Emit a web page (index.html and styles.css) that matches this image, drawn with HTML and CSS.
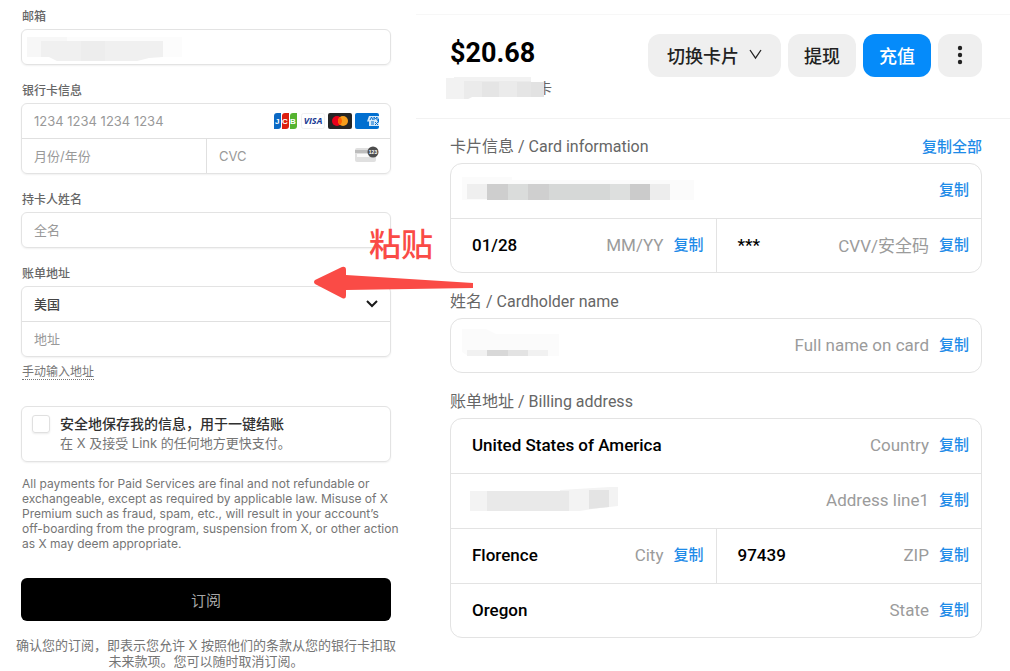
FILE: index.html
```html
<!DOCTYPE html>
<html lang="zh-CN">
<head>
  <meta charset="UTF-8">
  <meta name="viewport" content="width=device-width, initial-scale=1.0">
  <title>订阅</title>
  <link rel="stylesheet" href="styles.css">
</head>
<body>

  <div class="page">

    <!-- Checkout form -->
    <form class="checkout">
      <div class="group">
        <label for="email">邮箱</label>
        <div class="box">
          <div class="line">
            <input type="email" id="email">
            <svg class="mask mask-email" width="156" height="26" aria-hidden="true">
              <rect width="40" height="20" fill="#f7f7f7"/>
              <rect x="40" width="115" height="20" fill="#fcfcfc"/>
              <path d="M14 4H136V20L122 21L110 24H30L22 20H14Z" fill="#f0f0f0"/>
              <path d="M54 4H78V24H54Z" fill="#ededed"/>
            </svg>
          </div>
        </div>
      </div>

      <div class="group">
        <label for="cardNumber">银行卡信息</label>
        <div class="box">
          <div class="line">
            <input type="text" id="cardNumber" placeholder="1234 1234 1234 1234">
            <div class="brands">
              <svg width="24" height="16" viewBox="0 0 24 16" aria-hidden="true">
                <path d="M3 0H7V13Q7 16 4 16H0V3Q0 0 3 0Z" fill="#0b69c4"/>
                <path d="M11 0H15V13Q15 16 12 16H8V3Q8 0 11 0Z" fill="#dc1f10"/>
                <path d="M19 0H23V13Q23 16 20 16H16V3Q16 0 19 0Z" fill="#55b330"/>
                <text x="1" y="11" class="brand-jcb">J</text>
                <text x="8" y="11" class="brand-jcb">C</text>
                <text x="16" y="11" class="brand-jcb">B</text>
              </svg>
              <svg width="24" height="16" viewBox="0 0 24 16" aria-hidden="true">
                <rect x=".5" y=".5" width="23" height="15" rx="2" fill="#fff" stroke="#f0f0f0"/>
                <text x="12" y="11" class="brand-visa">VISA</text>
              </svg>
              <svg width="24" height="16" viewBox="0 0 24 16" aria-hidden="true">
                <rect width="24" height="16" rx="2" fill="#252525"/>
                <circle cx="9" cy="8" r="5" fill="#eb001b"/>
                <circle cx="15" cy="8" r="5" fill="#f79e1b"/>
                <path d="M12 4A5 5 0 0 1 12 12A5 5 0 0 1 12 4Z" fill="#ff5f00"/>
              </svg>
              <svg width="24" height="16" viewBox="0 0 24 16" aria-hidden="true">
                <rect width="24" height="16" rx="2" fill="#016fd0"/>
                <path d="M14 3H24V5L22 7.500L24 10V13H14V8.500H12L14 3Z" fill="#d5e8f8"/>
                <path d="M15 7L16.500 4L18 7M19 7V4L20.500 6L22 4V7M16 9H19M16 11H19M20 9L23 12M23 9L20 12" fill="none" stroke="#016fd0"/>
              </svg>
            </div>
          </div>
          <div class="line split">
            <input type="text" aria-label="月份/年份" placeholder="月份/年份">
            <div class="cvc">
              <input type="text" aria-label="CVC" placeholder="CVC">
              <svg width="24" height="20" viewBox="0 0 24 20" aria-hidden="true">
                <rect y="2" width="21" height="14" rx="2" fill="#e0e0e0"/>
                <rect y="4" width="21" height="3" fill="#bdbdbd"/>
                <rect x="2" y="8" width="12" height="3" fill="#fafafa"/>
                <circle cx="18" cy="6" r="5.500" fill="#4d4d4d"/>
                <text x="18" y="8" class="cvc-digits">123</text>
              </svg>
            </div>
          </div>
        </div>
      </div>

      <div class="group">
        <label for="holder">持卡人姓名</label>
        <div class="box">
          <div class="line"><input type="text" id="holder" placeholder="全名"></div>
        </div>
      </div>

      <div class="group">
        <label for="country">账单地址</label>
        <div class="box">
          <div class="line">
            <select id="country">
              <option>美国</option>
            </select>
            <svg class="chevron" width="12" height="8" viewBox="0 0 12 8" aria-hidden="true">
              <path d="M1 1L6 6L11 1" fill="none" stroke="#1a1a1a" stroke-width="2"/>
            </svg>
          </div>
          <div class="line"><input type="text" aria-label="地址" placeholder="地址"></div>
        </div>
        <a class="manual" href="#">手动输入地址</a>
      </div>

      <div class="save">
        <input type="checkbox" id="save">
        <label for="save">
          <strong>安全地保存我的信息，用于一键结账</strong>
          <span>在 X 及接受 Link 的任何地方更快支付。</span>
        </label>
      </div>

      <p class="terms">All payments for Paid Services are final and not refundable or<br>
        exchangeable, except as required by applicable law. Misuse of X<br>
        Premium such as fraud, spam, etc., will result in your account’s<br>
        off-boarding from the program, suspension from X, or other action<br>
        as X may deem appropriate.</p>

      <button class="subscribe" type="button">订阅</button>

      <p class="confirm">确认您的订阅，即表示您允许 X 按照他们的条款从您的银行卡扣取<br>未来款项。您可以随时取消订阅。</p>
    </form>

    <!-- Virtual card details -->
    <main class="wallet">
      <header class="top">
        <div class="balance">
          <h1>$20.68</h1>
          <div class="card-name">
            <span>卡</span>
            <svg class="mask mask-name" width="98" height="22" aria-hidden="true">
              <path d="M0 1H8V0H85V5H98V20H26L22 22H0Z" fill="#f2f2f2"/>
              <path d="M18 4H85V20H26L22 22H18Z" fill="#ebebeb"/>
              <path d="M36 5H53V20H36ZM71 5H85V20H71Z" fill="#e5e5e5"/>
              <path d="M85 5H98V20H85Z" fill="#e2e2e2"/>
            </svg>
          </div>
        </div>
        <div class="actions">
          <button class="btn btn-switch" type="button">切换卡片
            <svg width="13" height="11" viewBox="0 0 13 11" aria-hidden="true">
              <path d="M1 1L6.500 9L12 1" fill="none" stroke="#222" stroke-width="1.300"/>
            </svg>
          </button>
          <button class="btn" type="button">提现</button>
          <button class="btn btn-primary" type="button">充值</button>
          <button class="btn btn-more" type="button" aria-label="更多">
            <svg width="6" height="20" viewBox="0 0 6 20" aria-hidden="true">
              <circle cx="3" cy="3" r="2.200"/>
              <circle cx="3" cy="10" r="2.200"/>
              <circle cx="3" cy="17" r="2.200"/>
            </svg>
          </button>
        </div>
      </header>

      <div class="details">
        <section>
          <div class="title">
            <h2>卡片信息 / Card information</h2>
            <button class="copy" type="button">复制全部</button>
          </div>
          <div class="card">
            <div class="row">
              <div class="cell">
                <svg class="mosaic" width="232" height="26" aria-hidden="true">
                  <path d="M0 0H50V3H232V23H0Z" fill="#fbfbfb"/>
                  <path d="M5 7H25V22H5Z" fill="#efefef"/>
                  <path d="M25 7H46V23H25Z" fill="#cecece"/>
                  <path d="M46 7H66V23H46Z" fill="#dadcdb"/>
                  <path d="M66 7H87V23H66Z" fill="#cfcfcf"/>
                  <path d="M87 7H148V23H87Z" fill="#d6d8d7"/>
                  <path d="M148 7H168V23H148Z" fill="#dddfde"/>
                  <path d="M168 7H188V23H168Z" fill="#cbcbcb"/>
                  <path d="M188 7H208V23H188Z" fill="#ededed"/>
                </svg>
                <button class="copy" type="button">复制</button>
              </div>
            </div>
            <div class="row">
              <div class="cell"><b>01/28</b><span>MM/YY</span><button class="copy" type="button">复制</button></div>
              <div class="cell"><b>***</b><span>CVV/安全码</span><button class="copy" type="button">复制</button></div>
            </div>
          </div>
        </section>

        <section>
          <div class="title"><h2>姓名 / Cardholder name</h2></div>
          <div class="card">
            <div class="row">
              <div class="cell">
                <svg class="mosaic" width="108" height="38" aria-hidden="true">
                  <path d="M0 3H24L34 8H97V30H6L0 26Z" fill="#fbfbfb"/>
                  <path d="M5 24H25V30H5ZM66 24H86V30H66Z" fill="#f1f1f1"/>
                  <path d="M25 24H46V30H25Z" fill="#d8d8d8"/>
                  <path d="M46 24H66V30H46Z" fill="#e3e3e3"/>
                </svg>
                <span>Full name on card</span><button class="copy" type="button">复制</button>
              </div>
            </div>
          </div>
        </section>

        <section>
          <div class="title"><h2>账单地址 / Billing address</h2></div>
          <div class="card">
            <div class="row">
              <div class="cell"><b>United States of America</b><span>Country</span><button class="copy" type="button">复制</button></div>
            </div>
            <div class="row">
              <div class="cell">
                <svg class="mosaic" width="158" height="26" aria-hidden="true">
                  <path d="M8 4H98V3L148 0H156V19L130 22L118 24H8Z" fill="#f3f3f3"/>
                  <path d="M25 4H107V24H25Z" fill="#e9e9e9"/>
                  <path d="M127 3H147V20L127 22Z" fill="#e4e4e4"/>
                </svg>
                <span>Address line1</span><button class="copy" type="button">复制</button>
              </div>
            </div>
            <div class="row">
              <div class="cell"><b>Florence</b><span>City</span><button class="copy" type="button">复制</button></div>
              <div class="cell"><b>97439</b><span>ZIP</span><button class="copy" type="button">复制</button></div>
            </div>
            <div class="row">
              <div class="cell"><b>Oregon</b><span>State</span><button class="copy" type="button">复制</button></div>
            </div>
          </div>
        </section>
      </div>
    </main>

    <!-- Paste hint over both panels -->
    <div class="hint">
      <span>粘贴</span>
      <svg width="160" height="34" viewBox="0 0 160 34" aria-hidden="true">
        <path d="M1 15L28 2Q32 1 32 5V10L159 18V23L32 25V30Q32 35 28 33L1 19Q-1 17 1 15Z" fill="#fa4b46"/>
      </svg>
    </div>
  </div>

</body>
</html>
```

FILE: styles.css
```css
* {
  box-sizing: border-box;
}

body {
  margin: 0;
  background: #fff;
  font-family: Inter, "Noto Sans CJK SC", sans-serif;
  color: #1a1a1a;
}

h1, h2, p {
  margin: 0;
  font-weight: 400;
}

input, select, button {
  font-family: inherit;
  margin: 0;
}

button {
  border: none;
  padding: 0;
  cursor: pointer;
  white-space: nowrap;
}

svg {
  display: block;
  flex: none;
}

.page {
  position: relative;
  display: grid;
  grid-template-columns: minmax(0, 416fr) minmax(0, 594fr);
}

/* checkout form */
.checkout {
  padding: 9px 25px 0 21px;
}

.group {
  margin-bottom: 18px;
}

.group label {
  display: block;
  margin-bottom: 4px;
  padding-left: 1px;
  font-size: 12px;
  line-height: 16px;
  font-weight: 500;
  color: #666;
}

.box, .save {
  border: 1px solid #e3e3e3;
  border-radius: 6px;
  box-shadow: 0 1px 2px rgba(0, 0, 0, 0.06);
}

.line {
  position: relative;
  display: flex;
  align-items: center;
  height: 34px;
}

.line + .line {
  height: 35px;
  border-top: 1px solid #e0e0e0;
}

.line input, .line select {
  flex: 1;
  min-width: 0;
  height: 100%;
  padding: 0 12px;
  border: none;
  border-radius: 6px;
  background: transparent;
  appearance: none;
  font-size: 13px;
  color: #444;
  outline: none;
}

.line select {
  font-weight: 500;
}

.line input::placeholder {
  color: #999;
  opacity: 1;
}

.split {
  display: grid;
  grid-template-columns: 1fr 1fr;
}

.brands {
  display: flex;
  gap: 3px;
  padding-right: 11px;
}

.brand-jcb {
  font: bold 8px "Liberation Sans", sans-serif;
  fill: #fff;
}

.brand-visa {
  font: italic bold 9px "Open Sans", sans-serif;
  fill: #1a3a94;
  text-anchor: middle;
}

.cvc {
  display: flex;
  align-items: center;
  min-width: 0;
  height: 34px;
  padding-right: 11px;
  border-left: 1px solid #e0e0e0;
}

.cvc-digits {
  font: bold 5px "Liberation Sans", sans-serif;
  fill: #fff;
  text-anchor: middle;
}

.chevron {
  position: absolute;
  right: 12px;
  pointer-events: none;
}

.mask {
  position: absolute;
  pointer-events: none;
}

.mask-email {
  left: 5px;
  top: 7px;
}

.manual {
  display: inline-block;
  margin: 8px 0 0 1px;
  font-size: 12px;
  line-height: 14px;
  color: #777;
  text-decoration: none;
  border-bottom: 1px dotted #777;
}

.save {
  display: flex;
  gap: 10px;
  margin-top: 26px;
  padding: 8px 10px 7px;
}

.save input {
  flex: none;
  width: 18px;
  height: 18px;
  border: 1px solid #e0e0e0;
  border-radius: 3px;
  box-shadow: 0 1px 2px rgba(0, 0, 0, 0.08);
  appearance: none;
}

.save label {
  display: flex;
  flex-direction: column;
}

.save strong {
  font-size: 14px;
  line-height: 18px;
  font-weight: 500;
  color: #303030;
}

.save span {
  font-size: 13px;
  line-height: 21px;
  color: #757575;
}

.terms {
  margin-top: 14px;
  padding-left: 1px;
  font-size: 12px;
  line-height: 15px;
  color: #757575;
  white-space: nowrap;
}

.subscribe {
  display: block;
  width: 100%;
  height: 43px;
  margin-top: 27px;
  border-radius: 6px;
  background: #000;
  font-size: 15px;
  color: #a6a6a6;
}

.confirm {
  margin: 16px -8px 0;
  font-size: 13px;
  line-height: 16px;
  color: #757575;
  text-align: center;
  white-space: nowrap;
}

/* card details */
.wallet {
  padding-top: 14px;
  font-family: Roboto, "Noto Sans CJK SC", sans-serif;
}

.top {
  display: flex;
  justify-content: space-between;
  height: 105px;
  padding: 19px 28px 0 34px;
  border-top: 1px solid #f7f7f7;
  border-bottom: 1px solid #f2f2f2;
}

.balance h1 {
  font-size: 27px;
  line-height: 39px;
  font-weight: 700;
  color: #000;
}

.card-name {
  position: relative;
  padding: 5px 0 0 88px;
  font-size: 14px;
  line-height: 20px;
  color: #666;
}

.mask-name {
  left: -4px;
  top: 4px;
}

.actions {
  display: flex;
  gap: 7px;
}

.btn {
  display: flex;
  align-items: center;
  justify-content: center;
  height: 43px;
  padding: 0 16px 2px;
  border-radius: 12px;
  background: #efefef;
  font-size: 18px;
  font-weight: 500;
  color: #222;
}

.btn-switch {
  gap: 10px;
  padding: 0 19px 2px;
}

.btn-primary {
  background: #058bfa;
  color: #fff;
}

.btn-more {
  width: 44px;
  fill: #222;
}

.details {
  display: flex;
  flex-direction: column;
  gap: 19px;
  padding: 18px 28px 0 34px;
}

.title {
  display: flex;
  justify-content: space-between;
  margin-bottom: 6px;
  line-height: 20px;
}

.title h2 {
  font-size: 16px;
  color: #666;
}

.card {
  border: 1px solid #e3e3e3;
  border-radius: 12px;
}

.row {
  display: flex;
  height: 55px;
  border-bottom: 1px solid #e3e3e3;
}

.row:last-child {
  height: 53px;
  border-bottom: none;
}

.cell {
  flex: 1;
  display: flex;
  align-items: center;
  padding: 0 12px 2px 21px;
  font-size: 17px;
}

.cell + .cell {
  border-left: 1px solid #e3e3e3;
}

.cell b {
  font-weight: 500;
  color: #000;
}

.cell span {
  margin-left: auto;
  color: #9b9b9b;
}

.cell .copy {
  margin-left: auto;
}

.cell span + .copy {
  margin-left: 10px;
}

.mosaic {
  margin-left: -10px;
}

.copy {
  background: none;
  font-size: 15px;
  line-height: 20px;
  font-weight: 500;
  color: #1e8be8;
}

/* red arrow with its caption */
.hint {
  position: absolute;
  left: 314px;
  top: 225px;
  width: 160px;
  pointer-events: none;
}

.hint span {
  display: block;
  padding-left: 55px;
  font-size: 32px;
  line-height: 40px;
  font-weight: 500;
  font-family: Roboto, "Noto Sans CJK SC", sans-serif;
  color: #fa4b46;
}
```
